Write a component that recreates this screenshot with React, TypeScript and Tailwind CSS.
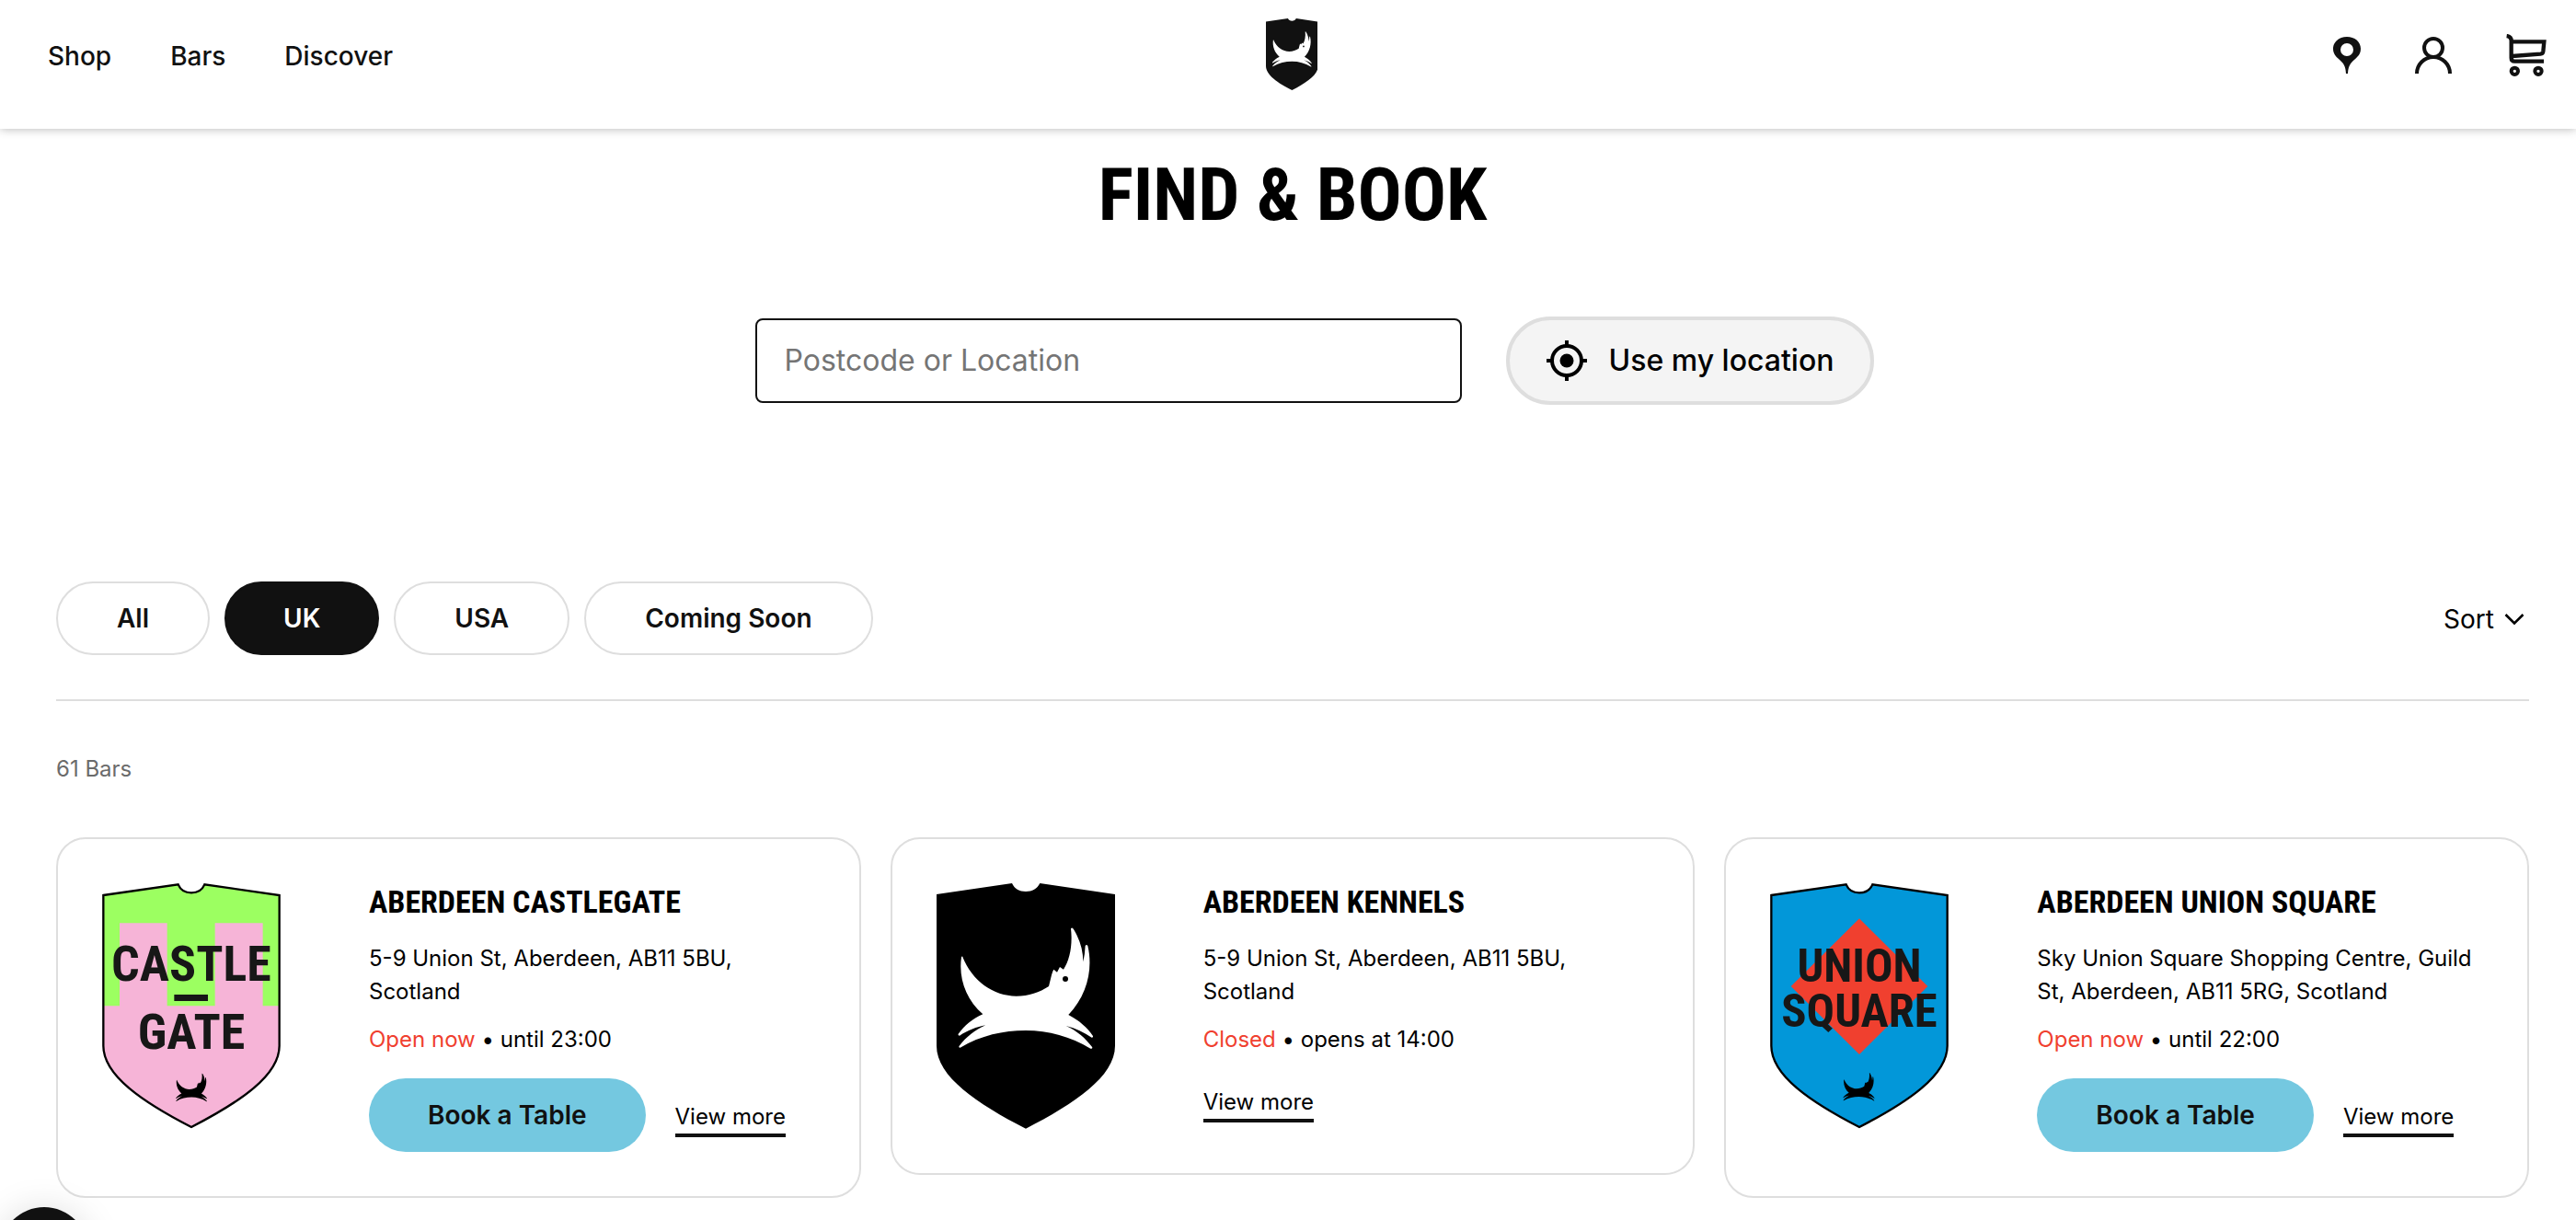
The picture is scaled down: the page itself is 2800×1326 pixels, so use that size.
import React from 'react';

type Bar = {
  name: string;
  address: string;
  status: string;
  hours: string;
  bookable: boolean;
  badge: React.ReactNode;
};

const SHIELD =
  'M0 36 L246 0 C254 18 270 27 291 27 C312 27 328 18 337 0 L582 36 V530 C582 630 450 718 291 800 C132 718 0 630 0 530 Z';
const SHIELD_OUTLINE =
  'M4 39 L248 4 C256 23 271 31 291 31 C311 31 326 23 334 4 L578 39 V530 C578 627 448 714 291 795 C134 714 4 627 4 530 Z';
const DOG =
  'M15 93 C47 175 117 223 191 223 C232 223 267 211 297 191 L306 154 Q309 142 313 136 L324 145 L333 128 L345 136 C366 105 375 55 369 3 Q373 -3 378 5 C399 40 409 75 409 111 Q415 85 416 59 Q420 53 424 59 C442 135 422 220 361 284 C397 303 422 325 441 353 Q442 359 437 358 C412 341 385 328 353 320 C387 335 417 360 439 390 Q439 396 433 394 C367 355 297 335 222 335 C147 335 77 351 8 391 Q2 391 5 385 C27 357 57 333 91 318 C62 323 32 335 6 352 Q0 352 2 346 C22 320 47 297 82 282 C27 235 2 165 12 96 Z';

const LogoShield = ({ className, fill }: { className: string; fill: string }) => (
  <svg viewBox="0 0 582 800" className={className} aria-hidden="true">
    <path d={SHIELD} fill={fill} />
    <g transform="translate(69 145)">
      <path d={DOG} fill="#fff" />
      <circle cx="351" cy="167" r="9" fill={fill} />
    </g>
  </svg>
);

const condensed = "font-['Roboto_Condensed','Liberation_Sans_Narrow','Liberation_Sans',sans-serif] font-bold";

const CastlegateShield = () => (
  <svg viewBox="0 0 582 800" className="w-[194px] shrink-0">
    <clipPath id="castle-clip">
      <path d={SHIELD_OUTLINE} />
    </clipPath>
    <g clipPath="url(#castle-clip)">
      <rect width="582" height="800" fill="#9cff61" />
      <path d="M0 400 H57 V130 H212 V400 H368 V130 H524 V400 H582 V800 H0 Z" fill="#f6b4d7" />
    </g>
    <path d={SHIELD_OUTLINE} fill="none" stroke="#000" strokeWidth="7" />
    <text className={condensed} fill="#171717" fontSize="162" textAnchor="middle">
      <tspan x="291" y="318">CASTLE</tspan>
      <tspan x="291" y="540">GATE</tspan>
    </text>
    <rect x="235" y="363" width="110" height="21" fill="#171717" />
    <path d={DOG} transform="translate(240 620) scale(.232)" />
  </svg>
);

const UnionSquareShield = () => (
  <svg viewBox="0 0 582 800" className="w-[194px] shrink-0">
    <path d={SHIELD_OUTLINE} fill="#0297d9" stroke="#000" strokeWidth="7" />
    <path d="M291 115 L514 336 L291 558 L68 336 Z" fill="#f0402f" />
    <text className={condensed} fill="#171717" fontSize="152" textAnchor="middle">
      <tspan x="291" y="320">UNION</tspan>
      <tspan x="291" y="468">SQUARE</tspan>
    </text>
    <path d={DOG} transform="translate(238 618) scale(.232)" />
  </svg>
);

const PinIcon = () => (
  <svg viewBox="0 0 90 120" className="h-10" fill="#111">
    <path
      fillRule="evenodd"
      d="M45 0 C70 0 90 16 90 39 C90 62 72 70 60 84 C51 95 49 105 48 120 H42 C41 105 39 95 30 84 C18 70 0 62 0 39 C0 16 20 0 45 0 Z M45 21 a21 21 0 1 0 0 42 a21 21 0 1 0 0 -42 Z"
    />
  </svg>
);

const UserIcon = () => (
  <svg viewBox="0 0 120 120" className="h-10" fill="none" stroke="#111" strokeWidth="12">
    <circle cx="60" cy="36" r="30" />
    <path d="M6 120 A54 54 0 0 1 114 120" />
  </svg>
);

const CartIcon = () => (
  <svg viewBox="0 0 132 138" className="h-[46px]" fill="none" stroke="#111" strokeWidth="13">
    <path d="M2 6 Q17 8 17 22 V78 Q17 89 28 89 H123" />
    <path d="M17 25 H124 L121 56 Q120 64 112 65 L20 72" />
    <circle cx="28" cy="121" r="11" strokeWidth="12" />
    <circle cx="105" cy="121" r="11" strokeWidth="12" />
  </svg>
);

const TargetIcon = () => (
  <svg viewBox="0 0 44 44" className="w-11" fill="none" stroke="#000" strokeWidth="4">
    <circle cx="22" cy="22" r="16" />
    <circle cx="22" cy="22" r="7.5" fill="#000" stroke="none" />
    <path d="M22 0 V6 M22 38 V44 M0 22 H6 M38 22 H44" />
  </svg>
);

const filters = ['All', 'UK', 'USA', 'Coming Soon'];

const bars: Bar[] = [
  {
    name: 'Aberdeen Castlegate',
    address: '5-9 Union St, Aberdeen, AB11 5BU, Scotland',
    status: 'Open now',
    hours: 'until 23:00',
    bookable: true,
    badge: <CastlegateShield />,
  },
  {
    name: 'Aberdeen Kennels',
    address: '5-9 Union St, Aberdeen, AB11 5BU, Scotland',
    status: 'Closed',
    hours: 'opens at 14:00',
    bookable: false,
    badge: <LogoShield className="w-[194px] shrink-0" fill="#000" />,
  },
  {
    name: 'Aberdeen Union Square',
    address: 'Sky Union Square Shopping Centre, Guild St, Aberdeen, AB11 5RG, Scotland',
    status: 'Open now',
    hours: 'until 22:00',
    bookable: true,
    badge: <UnionSquareShield />,
  },
];

const BarCard = ({ bar }: { bar: Bar }) => (
  <article className="flex items-start gap-24 rounded-[32px] border-2 border-[#dedede] p-12">
    {bar.badge}
    <div className="min-w-0 flex-1">
      <h2 className={`${condensed} whitespace-nowrap text-[34px] uppercase leading-10`}>
        {bar.name}
      </h2>
      <p className="mt-6 text-[24px] leading-9">{bar.address}</p>
      <p className="mt-4 text-[24px] leading-9">
        <span className="text-[#f0402f]">{bar.status}</span> • {bar.hours}
      </p>
      <div className="mt-6 flex items-center gap-8">
        {bar.bookable && (
          <button className="h-20 rounded-full bg-[#74c8e0] px-16 text-[28px] font-semibold text-[#111]">
            Book a Table
          </button>
        )}
        <a href="#" className="border-b-4 border-[#111] pt-2 text-[24px] leading-9">
          View more
        </a>
      </div>
    </div>
  </article>
);

export default function App() {
  return (
    <div className="bg-white font-['Inter',sans-serif] text-black">
      <header className="grid h-[140px] grid-cols-3 items-start pl-10 pr-8 text-[#111] shadow-[0_0_10px_rgba(0,0,0,0.3)]">
        <nav className="flex gap-16 pl-3 pt-[43px] text-[28px] font-medium leading-9">
          <a href="#">Shop</a>
          <a href="#">Bars</a>
          <a href="#">Discover</a>
        </nav>
        <a href="#" aria-label="Home" className="mt-5 justify-self-center">
          <LogoShield className="h-[78px]" fill="#111" />
        </a>
        <div className="flex h-[120px] items-center justify-end gap-[59px]">
          <button aria-label="Find a bar"><PinIcon /></button>
          <button aria-label="Account"><UserIcon /></button>
          <button aria-label="Cart"><CartIcon /></button>
        </div>
      </header>

      <main className="pb-4 pl-[61px] pr-[51px] pt-2">
        <h1 className={`${condensed} text-center text-[80px] uppercase leading-[128px]`}>
          Find &amp; Book
        </h1>

        <form className="mt-[68px] flex items-center justify-center gap-12 pl-12">
          <input
            type="text"
            aria-label="Postcode or Location"
            placeholder="Postcode or Location"
            className="h-[92px] w-[768px] rounded-lg border-2 border-[#111] px-[30px] pb-0.5 text-[32px] placeholder:text-[#757575]"
          />
          <button
            type="button"
            className="flex h-24 items-center gap-6 rounded-full border-4 border-[#dedede] bg-[#f4f4f4] px-10 text-[32px] font-medium"
          >
            <TargetIcon />
            Use my location
          </button>
        </form>

        <div className="mt-48 flex items-center justify-between border-b-2 border-[#dedede] pb-12">
          <div className="flex gap-4 text-[28px] font-semibold text-[#111]">
            {filters.map((f) => (
              <button
                key={f}
                className={
                  f === 'UK'
                    ? 'h-20 rounded-full border-2 border-[#111] bg-[#111] px-[62px] text-white'
                    : 'h-20 rounded-full border-2 border-[#dedede] px-16'
                }
              >
                {f}
              </button>
            ))}
          </div>
          <button className="flex items-center gap-2.5 pr-1 pt-0.5 text-[28px]">
            Sort
            <svg viewBox="0 0 24 24" className="w-6" fill="none" stroke="#000" strokeWidth="2.6">
              <path d="M2.500 7 L12 16.500 L21.500 7" />
            </svg>
          </button>
        </div>

        <p className="mt-14 text-[24px] leading-9 text-[#6b6b6b]">61 Bars</p>

        <div className="mt-14 grid grid-cols-3 items-start gap-8">
          {bars.map((bar) => (
            <BarCard key={bar.name} bar={bar} />
          ))}
        </div>
      </main>

      <button
        aria-label="Open chat"
        className="fixed -bottom-[82px] left-0 size-24 rounded-full bg-[#111] shadow-[0_4px_40px_rgba(0,0,0,0.15)]"
      />
    </div>
  );
}
